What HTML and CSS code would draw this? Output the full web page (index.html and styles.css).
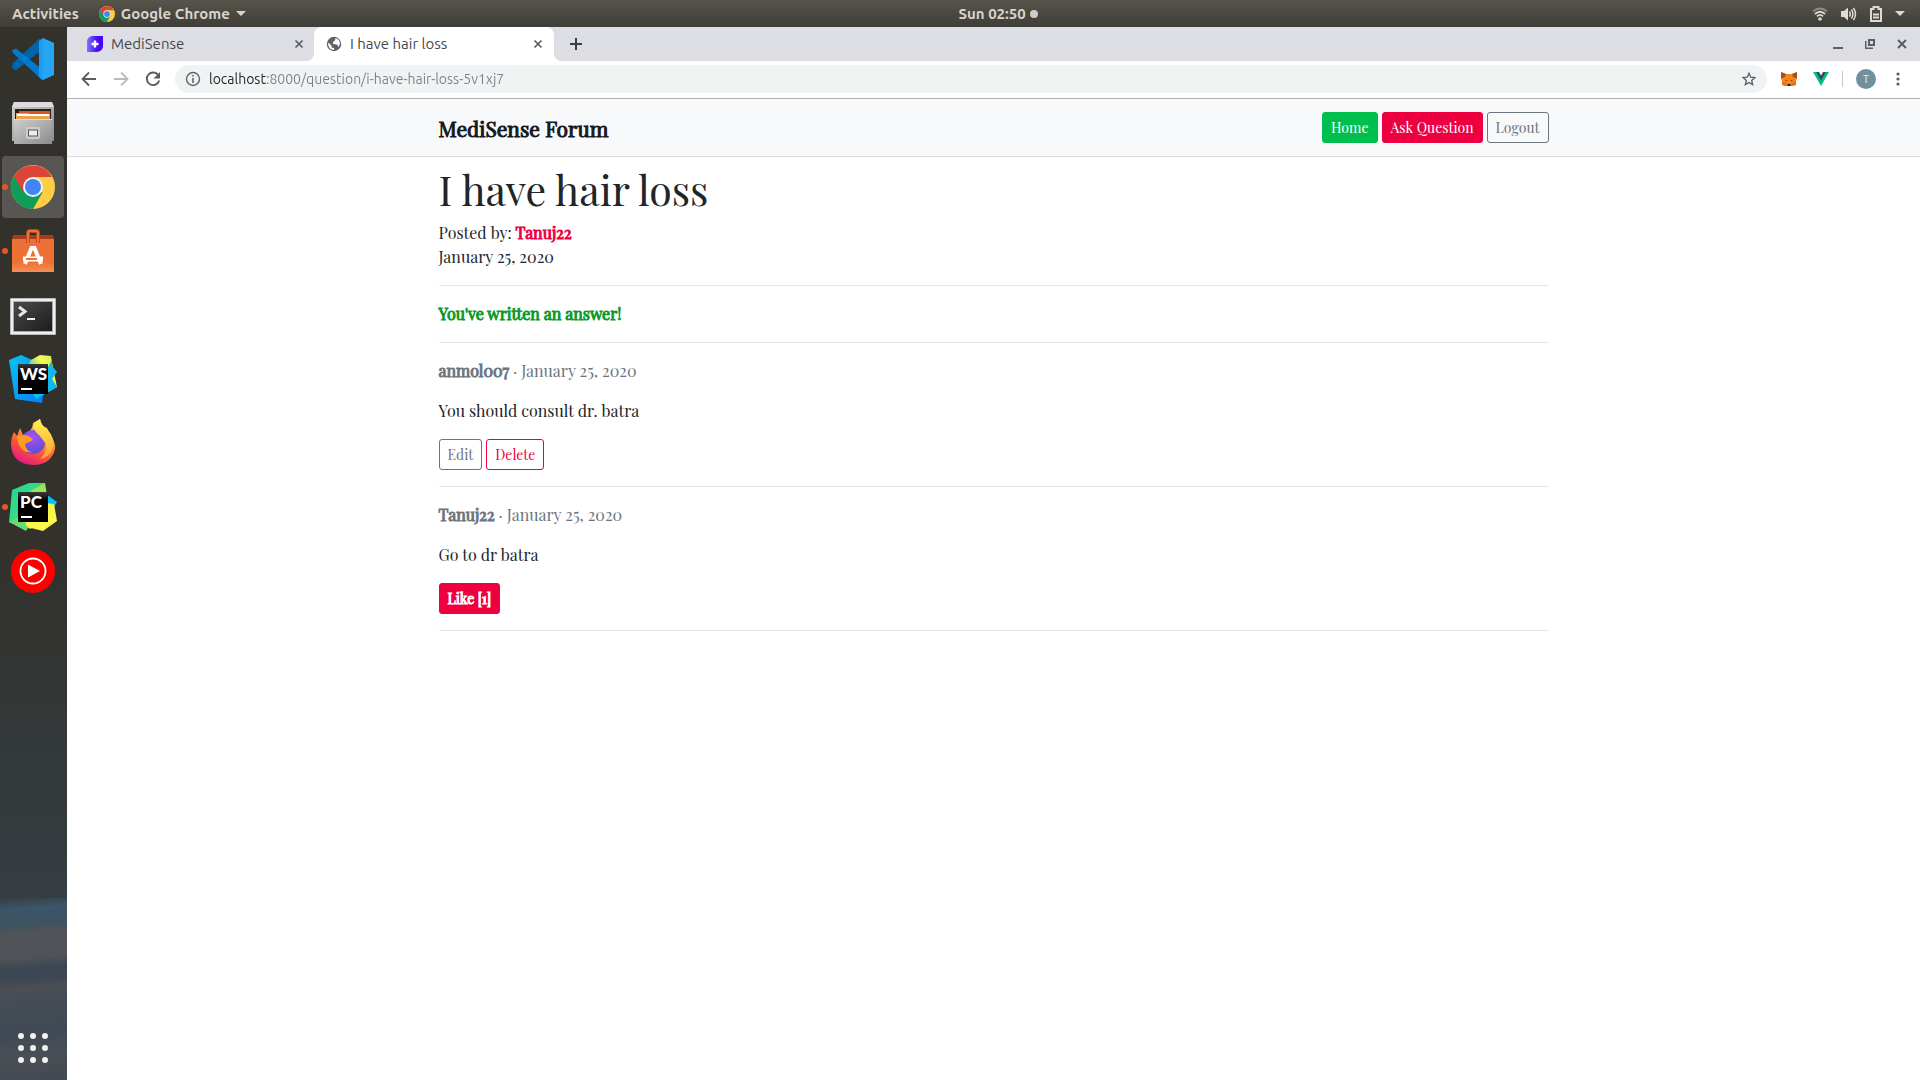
FILE: index.html
```html
<!DOCTYPE html>
<html lang="en">
<head>
<meta charset="utf-8">
<title>I have hair loss</title>
<link rel="stylesheet" href="styles.css">
</head>
<body>
<svg class="defs" aria-hidden="true">
  <defs>
    <linearGradient id="gray" x1="0" y1="0" x2="1" y2="1"><stop offset="0" stop-color="#cfcfcf"/><stop offset="1" stop-color="#8b8b8b"/></linearGradient>
    <linearGradient id="bag" x1="0" y1="0" x2="0" y2="1"><stop offset="0" stop-color="#e9713c"/><stop offset=".7" stop-color="#f0702f"/><stop offset="1" stop-color="#f58d5a"/></linearGradient>
    <linearGradient id="term" x1="0" y1="0" x2="1" y2="1"><stop offset="0" stop-color="#4a4a4a"/><stop offset=".5" stop-color="#333"/><stop offset="1" stop-color="#1c1c1c"/></linearGradient>
    <linearGradient id="ws" x1="0" y1="0" x2="1" y2="1"><stop offset="0" stop-color="#07c3f2"/><stop offset="1" stop-color="#087cfa"/></linearGradient>
    <linearGradient id="wsy" x1="0" y1="1" x2="1" y2="0"><stop offset="0" stop-color="#07c3f2"/><stop offset=".35" stop-color="#07c3f2"/><stop offset=".7" stop-color="#fcf84a"/><stop offset="1" stop-color="#b5ec70"/></linearGradient>
    <linearGradient id="pcg" x1="0" y1="0" x2="1" y2="1"><stop offset="0" stop-color="#21d789"/><stop offset=".5" stop-color="#3bd98a"/><stop offset="1" stop-color="#fcf84a"/></linearGradient>
    <linearGradient id="box" x1="0" y1="0" x2="0" y2="1"><stop offset="0" stop-color="#3a3a3a"/><stop offset=".3" stop-color="#000"/></linearGradient>
    <linearGradient id="ff" x1=".8" y1="0" x2=".3" y2="1"><stop offset="0" stop-color="#fff44f"/><stop offset=".35" stop-color="#ffa436"/><stop offset=".65" stop-color="#ff5634"/><stop offset="1" stop-color="#e31587"/></linearGradient>
    <linearGradient id="ffl" x1="0" y1="0" x2="0" y2="1"><stop offset="0" stop-color="#fff44f"/><stop offset="1" stop-color="#ff9a36"/></linearGradient>
    <radialGradient id="ffg" cx=".5" cy=".3" r=".7"><stop offset="0" stop-color="#a552f5"/><stop offset="1" stop-color="#5a4fd0"/></radialGradient>
    <linearGradient id="medi" x1="0" y1="0" x2="1" y2="0"><stop offset="0" stop-color="#7c74ff"/><stop offset=".6" stop-color="#4a10f5"/><stop offset="1" stop-color="#4700ff"/></linearGradient>
    <symbol id="chrome" viewBox="0 0 44 44">
      <circle cx="22" cy="22" r="22" fill="#ffcd42"/>
      <path d="M22 22 2.950 11A22 22 0 0 0 22 44L31.500 27.500Z" fill="#109d58"/>
      <path d="M2.950 11A22 22 0 0 1 41.050 12H22L12.500 27.500Z" fill="#db4437"/>
      <circle cx="22" cy="22" r="10" fill="#f1f1f1"/>
      <circle cx="22" cy="22" r="8" fill="#4285f4"/>
    </symbol>
    <symbol id="close" viewBox="0 0 10 10"><path d="M1.500 1.500 8.500 8.500M8.500 1.500 1.500 8.500" fill="none" stroke="currentColor" stroke-width="1.700"/></symbol>
  </defs>
</svg>

<header class="topbar">
  <div class="topbar-left">
    <button class="top-btn">Activities</button>
    <button class="top-btn app-menu"><svg width="16" height="16"><use href="#chrome"/></svg>Google Chrome<svg width="10" height="5" viewBox="0 0 10 5"><path d="M0 0h10L5 5Z" fill="currentColor"/></svg></button>
  </div>
  <button class="top-btn clock">Sun 02:50<span class="dot"></span></button>
  <div class="status">
    <svg width="16" height="16" viewBox="0 0 16 16" fill="none" stroke="#dfdbd2" stroke-width="1.800"><path d="M1 5.500Q8-.5 15 5.500" opacity=".45"/><path d="M3 8Q8 3.500 13 8M5 10.300Q8 7.500 11 10.300"/><circle cx="8" cy="13" r="1.800" fill="#dfdbd2" stroke="none"/></svg>
    <svg width="16" height="16" viewBox="0 0 16 16"><path d="M0 5h3l4-3.500v13L3 11H0Z" fill="#dfdbd2"/><path d="M8.500 5.500Q10 8 8.500 10.500M10.500 3.500Q13.300 8 10.500 12.500M12.500 1.800Q16.500 8 12.500 14.200" fill="none" stroke="#dfdbd2" stroke-width="1.500"/></svg>
    <svg width="12" height="16" viewBox="0 0 12 16"><path d="M1 3h2.500V1h5v2H11v12H1Z" fill="none" stroke="#dfdbd2" stroke-width="2"/><path d="M3 8.500h6M3 11.500h6" stroke="#dfdbd2" stroke-width="2"/></svg>
    <svg width="10" height="5" viewBox="0 0 10 5"><path d="M0 0h10L5 5Z" fill="#dfdbd2"/></svg>
  </div>
</header>

<div class="desktop">
  <nav class="dock" aria-label="Applications">
    <button class="app" aria-label="Visual Studio Code"><svg viewBox="0 0 48 48"><path d="M31 3 3.700 28.500 3 33l4 2.500L34 14Z" fill="#0065a9"/><path d="M3 15.500 7 13.500 34 35l-1 10-29-27Z" fill="#007acc"/><path d="M34 3 45 8v32l-11 5-2-2V5Z" fill="#25a5f2"/><path d="M34 3v42l-4-3V6Z" fill="#1f9cf0"/></svg></button>
    <button class="app" aria-label="Files"><svg viewBox="0 0 48 48"><path d="M5 3h38l2 5v34H3V8Z" fill="url(#gray)"/><path d="M5 3h38l2 5H3Z" fill="#ddd"/><path d="M6 10h36v10H6Z" fill="#29201a"/><path d="M10 12h31v8H7v-6h3Z" fill="#d9541e"/><path d="M7 14h12l2 1h20v5H7Z" fill="#eaa24d"/><path d="M8 15h32v2H8Z" fill="#fff"/><path d="M5 20h38v25H5Z" fill="url(#gray)"/><path d="M5 20h38v1H5Z" fill="#ddd"/><rect x="17" y="28" width="14" height="12" rx="2" fill="#ccc"/><rect x="19.500" y="31" width="9" height="6" fill="#eee" stroke="#555"/></svg></button>
    <button class="app running current" aria-label="Google Chrome"><svg viewBox="-2 -2 48 48"><use href="#chrome" width="44" height="44"/></svg></button>
    <button class="app running" aria-label="Ubuntu Software"><svg viewBox="0 0 48 48"><path d="M4 8h40l1 5H3Z" fill="#a93c13"/><path d="M3 12h42v33H3Z" fill="url(#bag)"/><path d="M19 16V6q0-2 2-2h6q2 0 2 2v10" fill="none" stroke="#b5481e" stroke-width="4"/><path d="M19 16V6q0-2 2-2h6q2 0 2 2v10" fill="none" stroke="#f0713b" stroke-width="2"/><path d="M16 37l6.500-16h3L32 37" fill="none" stroke="#fff" stroke-width="4"/><path d="M14 32h20" stroke="#fff" stroke-width="5"/><path d="M17 32h11" stroke="#ef7030" stroke-width="2"/></svg></button>
    <button class="app" aria-label="Terminal"><svg viewBox="0 0 48 48"><rect x="1" y="7" width="46" height="37" rx="1" fill="#bbb"/><rect x="2" y="8" width="44" height="35" fill="#eee"/><rect x="4" y="10" width="40" height="31" fill="#aaa"/><rect x="5" y="11" width="38" height="29" fill="url(#term)"/><path d="m10 16 6 4.500-6 4.500" fill="none" stroke="#e5e5e5" stroke-width="3"/><path d="M18 28h8" stroke="#eee" stroke-width="2"/></svg></button>
    <button class="app" aria-label="WebStorm"><svg viewBox="0 0 48 48"><path d="M0 5 12 0l18 8 5 25-2 15-27-4Z" fill="url(#ws)"/><path d="M22 5 31 0l11 1 2 12 4 19-21 12L14 20Z" fill="url(#wsy)"/><path d="M43 5v6l5 6-5 7 5 8-10 6V14Z" fill="#0db8f5"/><rect x="9" y="9" width="30" height="30" fill="url(#box)"/><text x="11" y="25" class="jb">WS</text><path d="M12 34h11" stroke="#fff" stroke-width="2"/></svg></button>
    <button class="app" aria-label="Firefox"><svg viewBox="0 0 48 48"><path d="M5 13 8 17l3-8 3 7Q24 12 24 4l7-4q1 7 7 9l3 6q6 9 5 15Q42 46 24 46 2 45 2 24 2 18 5 13Z" fill="url(#ff)"/><circle cx="24" cy="23" r="12" fill="url(#ffg)"/><path d="M31 0q1 7 7 10 8 9 6 18-2 10-13 12 7-7 6-15l-7-9q-6-5-6-9 2-4 7-7Z" fill="url(#ffl)"/><path d="M8 17q10-3 14 2l2 2-8 4q1 7 7 8-13 2-15-16Z" fill="#ff9a24"/></svg></button>
    <button class="app running" aria-label="PyCharm"><svg viewBox="0 0 48 48"><path d="m37 11 11 8-5 9-9-4Z" fill="#07c3f2"/><path d="M3 7 20 0l16 0 0 18-14 28L0 39Z" fill="url(#pcg)"/><path d="M20 9 36 0l2 12Z" fill="#9be35a"/><path d="m36 20 9 1 3 17-14 10-20-5Z" fill="#fcf84a"/><path d="m0 39 12-6 7 12-2 3Z" fill="#65df72"/><rect x="9" y="9" width="30" height="30" fill="url(#box)"/><text x="11" y="25" class="jb">PC</text><path d="M12 34h11" stroke="#fff" stroke-width="2"/></svg></button>
    <button class="app" aria-label="YouTube Music"><svg viewBox="0 0 48 48"><circle cx="24" cy="24" r="22" fill="#f00"/><circle cx="24" cy="24" r="12.500" fill="none" stroke="#fff" stroke-width="1.800"/><path d="m19 17.500 12 6.500-12 6.500Z" fill="#fff"/></svg></button>
    <button class="app show-apps" aria-label="Show applications"><svg viewBox="0 0 48 48" fill="#f2f1f0"><circle cx="12" cy="12" r="3"/><circle cx="24" cy="12" r="3"/><circle cx="36" cy="12" r="3"/><circle cx="12" cy="24" r="3"/><circle cx="24" cy="24" r="3"/><circle cx="36" cy="24" r="3"/><circle cx="12" cy="36" r="3"/><circle cx="24" cy="36" r="3"/><circle cx="36" cy="36" r="3"/></svg></button>
  </nav>

  <div class="browser">
    <div class="tabs">
      <div class="tab">
        <svg width="16" height="18" viewBox="0 0 16 18"><path d="M5 1h11v10q0 5-6 6H0V7Q0 2 5 1Z" fill="url(#medi)"/><path d="M8 5.500v7M4.500 9h7" stroke="#fff" stroke-width="2.400"/></svg>
        <span class="tab-title">MediSense</span>
        <button class="icon-btn" aria-label="Close tab"><svg width="10" height="10"><use href="#close"/></svg></button>
      </div>
      <div class="tab active">
        <svg width="16" height="16" viewBox="0 0 16 16"><circle cx="8" cy="8" r="7.200" fill="#5f6368"/><path d="M2.200 6.500 5.500 9.500V11.500L8 12v2Q3 13.500 2.200 9ZM9.500 2q4 1 4.500 5.500l-1.500 3.500-1.500-2.500-4-.5V6l2-1.500Z" fill="#fff"/></svg>
        <span class="tab-title">I have hair loss</span>
        <button class="icon-btn" aria-label="Close tab"><svg width="10" height="10"><use href="#close"/></svg></button>
      </div>
      <button class="icon-btn new-tab" aria-label="New tab"><svg width="12" height="12" viewBox="0 0 12 12"><path d="M6 0v12M0 6h12" stroke="currentColor" stroke-width="2"/></svg></button>
      <div class="window-controls">
        <button class="icon-btn" aria-label="Minimize"><svg width="10" height="10" viewBox="0 0 10 10"><path d="M0 9h10" stroke="currentColor" stroke-width="2"/></svg></button>
        <button class="icon-btn" aria-label="Restore"><svg width="10" height="10" viewBox="0 0 10 10" fill="none" stroke="currentColor"><path d="M4 1h5v5H4Z" stroke-width="2"/><path d="M.75 2v7.250H8" stroke-width="1.500"/></svg></button>
        <button class="icon-btn" aria-label="Close window"><svg width="10" height="10" viewBox="0 0 10 10"><path d="M1 1 9 9M9 1 1 9" stroke="currentColor" stroke-width="2"/></svg></button>
      </div>
    </div>

    <div class="toolbar">
      <button class="icon-btn" aria-label="Back"><svg width="16" height="16" viewBox="0 0 16 16" fill="none" stroke="currentColor" stroke-width="1.800"><path d="M15 8H2M8 1.500 1.500 8 8 14.500"/></svg></button>
      <button class="icon-btn faded" aria-label="Forward"><svg width="16" height="16" viewBox="0 0 16 16" fill="none" stroke="currentColor" stroke-width="1.800"><path d="M1 8h13M8 1.500 14.500 8 8 14.500"/></svg></button>
      <button class="icon-btn" aria-label="Reload"><svg width="16" height="16" viewBox="0 0 16 16"><path d="M13.500 4.500A6.300 6.300 0 1 0 14.200 9.500" fill="none" stroke="currentColor" stroke-width="1.900"/><path d="M15 1v6.500H8.500Z" fill="currentColor"/></svg></button>
      <div class="omnibox">
        <svg width="16" height="16" viewBox="0 0 16 16"><circle cx="8" cy="8" r="6.500" fill="none" stroke="#5f6368" stroke-width="1.400"/><path d="M8 7v5M8 4v1.600" stroke="#5f6368" stroke-width="1.600"/></svg>
        <input class="url" type="text" aria-label="Address" value="localhost:8000/question/i-have-hair-loss-5v1xj7">
        <button class="icon-btn" aria-label="Bookmark"><svg width="14" height="14" viewBox="0 0 14 14"><path d="m7 1.300 1.700 3.900 4.200.4-3.200 2.800 1 4.200L7 10.400l-3.700 2.200 1-4.200L1.100 5.600l4.200-.4Z" fill="none" stroke="currentColor" stroke-width="1.300"/></svg></button>
      </div>
      <button class="icon-btn" aria-label="MetaMask"><svg width="16" height="16" viewBox="0 0 16 16"><path d="M0 1 5 3h6L16 1v6l-1 3v4l-4 1H5l-4-1v-4L0 7Z" fill="#f6851b"/><path d="M0 1 5 3 4 6 0 7.500ZM16 1l-5 2 1 3 4 1.500Z" fill="#a5501f"/><path d="m4.500 8.500 2 1-1.500 1ZM11.500 8.500l-2 1 1.500 1Z" fill="#7a3a14"/><path d="M1 11l4 1 1 3-5-1ZM15 11l-4 1-1 3 5-1Z" fill="#e0701c"/><path d="M6.500 13h3v2h-3Z" fill="#222"/></svg></button>
      <button class="icon-btn" aria-label="Vue devtools"><svg width="16" height="14" viewBox="0 0 16 14"><path d="M0 0h16L8 14Z" fill="#00c180"/><path d="M3.200 0h9.600L8 8.500Z" fill="#35495e"/><path d="M6 0h4L8 3.500Z" fill="#fff"/></svg></button>
      <span class="separator"></span>
      <button class="avatar" aria-label="Profile">T</button>
      <button class="icon-btn more" aria-label="Menu"><svg width="4" height="14" viewBox="0 0 4 14" fill="currentColor"><circle cx="2" cy="2" r="1.600"/><circle cx="2" cy="7" r="1.600"/><circle cx="2" cy="12" r="1.600"/></svg></button>
    </div>

    <div class="page">
      <nav class="navbar">
        <div class="container nav-row">
          <a class="brand" href="#">MediSense Forum</a>
          <div class="actions">
            <a class="btn btn-success" href="#">Home</a>
            <a class="btn btn-danger" href="#">Ask Question</a>
            <a class="btn btn-outline" href="#">Logout</a>
          </div>
        </div>
      </nav>
      <main class="container question">
        <h1>I have hair loss</h1>
        <p>Posted by: <a class="author" href="#">Tanuj22</a><br>January 25, 2020</p>
        <hr>
        <p class="notice">You've written an answer!</p>
        <hr>
        <article>
          <p class="muted"><strong>anmol007</strong> · January 25, 2020</p>
          <p>You should consult dr. batra</p>
          <div class="actions">
            <button class="btn btn-outline">Edit</button>
            <button class="btn btn-outline-danger">Delete</button>
          </div>
        </article>
        <hr>
        <article>
          <p class="muted"><strong>Tanuj22</strong> · January 25, 2020</p>
          <p>Go to dr batra</p>
          <div class="actions">
            <button class="btn btn-danger"><strong>Like [1]</strong></button>
          </div>
        </article>
        <hr>
      </main>
    </div>
  </div>
</div>
</body>
</html>
```
FILE: styles.css
```css
* { box-sizing: border-box; }

body {
  margin: 0;
  min-height: 100vh;
  display: flex;
  flex-direction: column;
  font-family: Ubuntu, "Noto Sans", sans-serif;
  background: #fff;
}

button { font: inherit; border: 0; padding: 0; background: none; color: inherit; }
svg { display: block; flex: none; }
.defs { position: absolute; width: 0; height: 0; }

/* Desktop top bar */
.topbar {
  height: 27px;
  padding: 0 15px 0 12px;
  display: grid;
  grid-template-columns: 50% auto 1fr;
  align-items: center;
  background: linear-gradient(#57544c, #3e3d37);
  color: #d8d5cd;
  font-size: 15px;
  font-weight: 700;
}
.topbar-left { display: flex; gap: 20px; }
.top-btn { display: flex; align-items: center; }
.app-menu { gap: 6px; }
.clock { gap: 4px; }
.dot { width: 8px; height: 8px; border-radius: 50%; background: #d0cdc6; }
.status { display: flex; align-items: center; justify-content: flex-end; gap: 13px; }

/* Dock */
.desktop { flex: 1; display: flex; }
.dock {
  flex: none;
  width: 67px;
  padding: 1px 3px 1px 2px;
  display: flex;
  flex-direction: column;
  gap: 2px;
  background:
    linear-gradient(176deg, #353e43 0, #3c5568 12px, #3d5362 28px, #505357 36px, #4f5257 62px, #3c4653 72px, #3d4653 82px, #4b4f55 92px, #434b55 110px, #414a54 140px, #4a4f56 160px, #434950 184px) bottom / 100% 182px no-repeat,
    linear-gradient(#32312c 60%, #353e43 100%) top / 100% calc(100% - 180px) no-repeat #353e43;
}
.app {
  position: relative;
  width: 62px;
  height: 62px;
  border-radius: 4px;
  display: grid;
  place-items: center;
}
.app svg { width: 48px; height: 48px; }
.current { background: #575653; }
.running::before {
  content: "";
  position: absolute;
  left: 0;
  top: 28px;
  width: 6px;
  height: 6px;
  border-radius: 50%;
  background: #e95420;
}
.show-apps { margin-top: auto; }
.jb { font: 900 17px Lato, sans-serif; fill: #fff; }

/* Browser chrome */
.browser { flex: 1; min-width: 0; display: flex; flex-direction: column; }
.tabs {
  height: 34px;
  padding-right: 13px;
  display: flex;
  align-items: stretch;
  background: #dddee4;
  color: #45484c;
}
.icon-btn { flex: none; display: grid; place-items: center; color: #5a5d61; }
.tab {
  position: relative;
  width: 240px;
  padding: 0 11px 0 12px;
  display: flex;
  align-items: center;
  gap: 8px;
  font-size: 15px;
}
.tab:first-child { width: 247px; padding: 0 10px 0 20px; }
.tab-title { flex: 1; padding-bottom: 2px; }
.active { background: #fff; border-radius: 8px 8px 0 0; }
.active::before, .active::after {
  content: "";
  position: absolute;
  bottom: 0;
  width: 8px;
  height: 8px;
}
.active::before { left: -8px; background: radial-gradient(circle at 0 0, transparent 8px, #fff 8px); }
.active::after { right: -8px; background: radial-gradient(circle at 100% 0, transparent 8px, #fff 8px); }
.new-tab { margin-left: 16px; color: #3c4043; }
.window-controls { margin-left: auto; display: flex; gap: 22px; }

.toolbar {
  height: 38px;
  padding: 0 20px 1px 14px;
  display: flex;
  align-items: center;
  gap: 16px;
  border-bottom: 1px solid #b0b1b3;
  background: #fff;
}
.faded { color: #b9bbbd; }
.omnibox {
  flex: 1;
  height: 28px;
  margin: 0 -2px;
  padding: 0 11px 0 10px;
  border-radius: 14px;
  display: flex;
  align-items: center;
  gap: 8px;
  background: #f0f3f4;
}
.url {
  flex: 1;
  min-width: 0;
  height: 24px;
  padding: 0;
  border: 0;
  outline: 0;
  font: 14px Ubuntu, "Noto Sans", sans-serif;
  color: transparent;
  background: linear-gradient(90deg, #202124 57px, #7d8084 57px);
  -webkit-background-clip: text;
  background-clip: text;
}
.separator { width: 1px; height: 16px; margin: 0 -3px; background: #c4c7ca; }
.avatar {
  width: 20px;
  height: 20px;
  border-radius: 50%;
  background: #728f9e;
  color: #e8eef0;
  font-size: 11px;
}
.more { margin-left: 4px; }

/* Forum page */
.page {
  flex: 1;
  font-family: "Playfair Display", "Liberation Serif", serif;
  font-size: 16px;
  line-height: 24px;
  color: #212529;
}
.container { width: 100%; max-width: 1140px; margin: 0 auto; padding: 0 15px; }
.navbar { padding: 13px 0; background: #f8f9fb; border-bottom: 1px solid #dadcde; }
.nav-row { display: flex; align-items: center; justify-content: space-between; }
.brand { color: #16181b; font-size: 21px; text-decoration: none; }
.question { padding-top: 8px; }
h1 { margin: 0 0 8px; font-size: 41px; line-height: 48px; font-weight: 400; }
p { margin: 0 0 16px; }
hr { margin: 16px 0; border: 0; border-top: 1px solid #e4e5e6; }
.brand, .author, .notice, strong {
  font-weight: 400;
  -webkit-text-stroke: 1px currentColor;
}
.author { color: #ed0040; text-decoration: none; }
.notice { color: #0a9928; }
.muted { color: #6c757d; }
.actions { display: flex; gap: 4px; }
.btn {
  height: 31px;
  padding: 4px 8px;
  border: 1px solid;
  border-radius: 3px;
  font-size: 14px;
  line-height: 21px;
  text-decoration: none;
}
.btn-success { color: #fff; background: #00c04d; border-color: #00c04d; }
.btn-danger { color: #fff; background: #ed0040; border-color: #ed0040; }
.btn-outline { color: #6c757d; border-color: #6c757d; }
.btn-outline-danger { color: #ed0040; border-color: #ed0040; }
```
